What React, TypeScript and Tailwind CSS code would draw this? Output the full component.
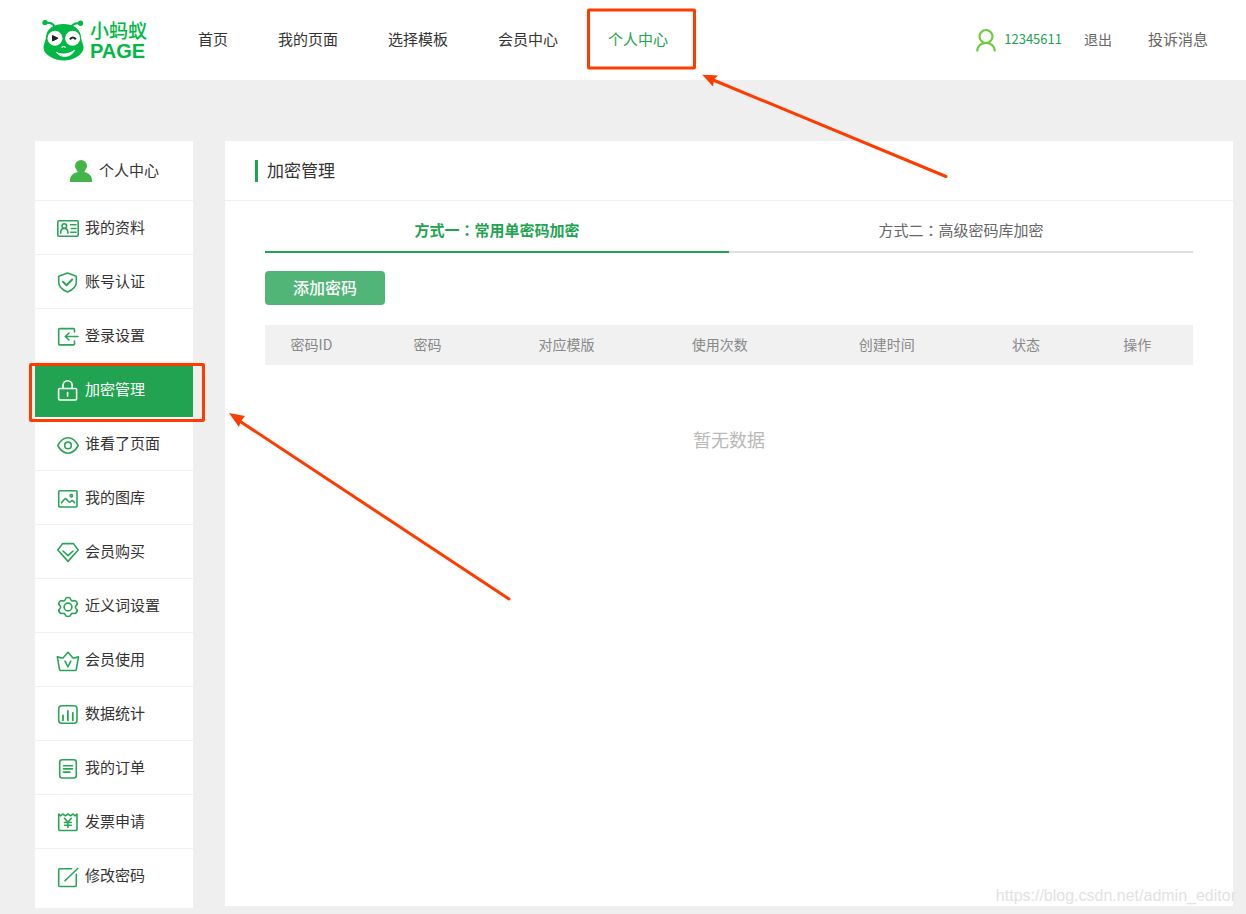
import { useState, type ReactNode } from 'react';
import { clsx } from 'clsx';

const navItems = ['首页', '我的页面', '选择模板', '会员中心', '个人中心'];

const menuItems: { label: string; icon: ReactNode }[] = [
  {
    label: '我的资料',
    icon: (
      <>
        <rect x="0.8" y="2.8" width="20.4" height="15.4" rx="1.2" />
        <circle cx="7.3" cy="8" r="2.3" />
        <path d="M3.6 15.2c0-3 1.5-4.8 3.7-4.8s3.7 1.8 3.7 4.8M13.5 6.8H19M14.5 10.5H19M13.5 14.2H19" />
      </>
    ),
  },
  {
    label: '账号认证',
    icon: (
      <>
        <path d="M10.5 1 19.3 4.200v6.300c0 4.300-3.700 7.300-8.800 9.500-5.100-2.200-8.800-5.200-8.800-9.500V4.200z" />
        <path d="m6 9.800 3.500 3.400 5.700-5.700" strokeWidth="2" />
      </>
    ),
  },
  {
    label: '登录设置',
    icon: (
      <>
        <path d="M17.500 6V3.600a1 1 0 0 0-1-1H2.700a1 1 0 0 0-1 1v14.300a1 1 0 0 0 1 1h13.800a1 1 0 0 0 1-1V15" />
        <path d="M21 10.500H8.500M12 7l-3.700 3.500L12 14" />
      </>
    ),
  },
  {
    label: '加密管理',
    icon: (
      <>
        <rect x="1.600" y="8.500" width="18" height="11.500" rx="1.200" />
        <path d="M6 8.500V5.300a4.600 4.600 0 0 1 9.200 0v3.200M10.600 12.500v3.700" />
      </>
    ),
  },
  {
    label: '谁看了页面',
    icon: (
      <>
        <path d="M.8 11.500C3.500 6.500 7 3.700 11 3.700s7.500 2.800 10.200 7.800c-2.700 5-6.200 7.700-10.200 7.700S3.500 16.500.8 11.500z" />
        <circle cx="11" cy="11.400" r="3.300" />
      </>
    ),
  },
  {
    label: '我的图库',
    icon: (
      <>
        <rect x="1.700" y="2.700" width="18.300" height="16.300" rx="1" />
        <circle cx="14.300" cy="7.800" r="1.200" />
        <path d="M4.500 14.800 7.700 11c.6-.5 1.100-.4 1.600.1l2.500 2.700c.5.500 1 .5 1.500.1l1.300-1c.5-.4 1-.3 1.500.2l1.400 1.700" />
      </>
    ),
  },
  {
    label: '会员购买',
    icon: (
      <>
        <path d="M5.500 1.600h11L21.200 8 11 19.400.8 8z" />
        <path d="m6 9 5 4.600L16 9" />
      </>
    ),
  },
  {
    label: '近义词设置',
    icon: (
      <>
        <path d="M8.300 3.200C8.600 1.800 9.300 1.500 11 1.500s2.400.3 2.700 1.700c.4 1.500 1.600 2.100 3 1.600 1.400-.5 2.200 0 3 1.400s.8 2.300-.4 3.200c-1.200 1-1.200 2.400 0 3.400 1.200.9 1.200 1.800.4 3.200s-1.600 1.900-3 1.400c-1.400-.5-2.600.1-3 1.600-.3 1.200-1 1.500-2.700 1.500s-2.400-.3-2.700-1.500c-.4-1.500-1.600-2.100-3-1.600-1.400.5-2.200 0-3-1.400s-.8-2.300.4-3.200c1.200-1 1.200-2.400 0-3.400-1.200-.9-1.200-1.800-.4-3.200s1.600-1.900 3-1.400c1.400.5 2.600-.1 3-1.600z" />
        <circle cx="11" cy="11" r="3.900" />
      </>
    ),
  },
  {
    label: '会员使用',
    icon: (
      <>
        <path d="M.3 6.800c2 .9 4 1.200 5.700 1.200L11 2.300 16 8c1.700 0 3.500-.3 5.500-1.200L19.300 19.300a1.500 1.500 0 0 1-1.500 1.200H4a1.500 1.500 0 0 1-1.500-1.200z" />
        <path d="m8 11.200 2.900 5.600 2.900-5.600" />
      </>
    ),
  },
  {
    label: '数据统计',
    icon: (
      <>
        <rect x="1.700" y="1.700" width="18.300" height="17.600" rx="3" />
        <path d="M6 11.500v4.800M10.900 6.800v9.500M15.800 8.800v7.500" strokeWidth="1.800" />
      </>
    ),
  },
  {
    label: '我的订单',
    icon: (
      <>
        <rect x="2.700" y="1.700" width="16.600" height="18.300" rx="2.500" />
        <path d="M6.500 7.700h9M6.500 10.900h9M6.500 14.100h6.500" />
      </>
    ),
  },
  {
    label: '发票申请',
    icon: (
      <>
        <path d="M1.700 2v15.300a1.200 1.200 0 0 0 1.200 1.200h15.900a1.200 1.200 0 0 0 1.200-1.200V2l-1.800 1.800L16 2l-2.400 1.800L10.900 2 8.300 3.800 5.700 2 3.500 3.800z" />
        <path d="m7.500 6.300 3.400 4L14.300 6.300M10.900 10.300v5.200M7.500 10.500h6.800M7.500 13.200h6.800" />
      </>
    ),
  },
  {
    label: '修改密码',
    icon: (
      <>
        <path d="M14.500 2.700H2.700a1 1 0 0 0-1 1v15.800a1 1 0 0 0 1 1h15.600a1 1 0 0 0 1-1V8.300" />
        <path d="M20.700 2.500 8 14.800" />
      </>
    ),
  },
];

const columns = [
  { title: '密码ID', width: 'w-[10%]' },
  { title: '密码', width: 'w-[15%]' },
  { title: '对应模版', width: 'w-[15%]' },
  { title: '使用次数', width: 'w-[18%]' },
  { title: '创建时间', width: 'w-[18%]' },
  { title: '状态', width: 'w-[12%]' },
  { title: '操作', width: 'w-[12%]' },
];

const tabs = ['方式一：常用单密码加密', '方式二：高级密码库加密'];

function Logo() {
  return (
    <a href="#" className="flex items-center gap-1.5 text-[#00b944]">
      <svg width="42" height="42" viewBox="0 0 42 42" fill="none">
        <path d="M3 4c5-.8 8.500.7 10 4.500M38.500 4.500c-5-.8-8 .5-9.500 4" stroke="currentColor" strokeWidth="2" />
        <circle cx="3" cy="3.600" r="2.700" fill="currentColor" />
        <circle cx="38.500" cy="4.300" r="2.700" fill="currentColor" />
        <path
          d="M21.500 5c8.500 0 15 3.500 17 10 .7 3.500.8 6.500 2.200 9.500 2.200 5.500 0 9.500-5.200 13-4 2.600-8.500 4-13.700 4s-10-1.400-14-4C2.300 34 .3 30 2.300 24.500 3.700 21.500 3.800 18.500 4.500 15 6.500 8.500 13 5 21.500 5z"
          fill="currentColor"
        />
        <circle cx="13" cy="19.300" r="7.500" fill="#fff" />
        <circle cx="30.600" cy="19.300" r="7.500" fill="#fff" />
        <path d="m10.500 16.500 5.500 2.800-5.500 2.700z" fill="#222" stroke="#222" />
        <path d="M28 20.500c1.200-2.700 4.500-2.700 5.700 0" stroke="#222" strokeWidth="2" />
        <path d="M19.700 28.600c.8-1.500 3-1.500 3.800 0" stroke="#fff" strokeWidth="1.200" />
        <path d="M14.500 33.600c6 2.600 12.500 1.600 18-2.300-3 6.500-12.500 8.700-18 2.300z" fill="#fff" stroke="#fff" strokeLinejoin="round" />
      </svg>
      <span className="flex flex-col gap-px pt-px">
        <span className="text-[19px] leading-5 font-medium">小蚂蚁</span>
        <span className="font-['Liberation_Sans',sans-serif] text-xl leading-5 font-bold">PAGE</span>
      </span>
    </a>
  );
}

function Header() {
  return (
    <header className="flex h-20 items-center bg-white pr-[38px] pl-[42px]">
      <Logo />
      <nav className="ml-[51px] flex gap-[50px] pb-0.5 text-[15px] text-[#333]">
        {navItems.map((item) =>
          item === '个人中心' ? (
            <a key={item} href="#" className="relative whitespace-nowrap text-[#22a351]">
              {item}
              {/* highlight frame with its pointer */}
              <span className="pointer-events-none absolute top-1/2 -left-[21px] h-[61px] w-[109px] -translate-y-1/2 rounded-xs border-3 border-[#ff3c00]">
                <svg className="absolute top-[63px] left-[112px]" width="250" height="108" viewBox="0 0 250 108">
                  <path d="M10 5 244 102" stroke="#ff3c00" strokeWidth="3" strokeLinecap="round" />
                  <path d="M0 0 16 1 12 5 11 12z" fill="#ff3c00" />
                </svg>
              </span>
            </a>
          ) : (
            <a key={item} href="#" className="whitespace-nowrap">
              {item}
            </a>
          ),
        )}
      </nav>
      <div className="ml-auto flex items-center pb-0.5 whitespace-nowrap text-[#666]">
        <a href="#" className="flex items-center gap-2 text-[13px] text-[#22a351]">
          <svg
            className="mt-0.5"
            width="20"
            height="24"
            viewBox="0 0 20 24"
            fill="none"
            stroke="#6fcb3e"
            strokeWidth="2.200"
            strokeLinecap="round"
          >
            <circle cx="10" cy="8.500" r="6.500" />
            <path d="M1.200 22.500c.8-4.500 4-7.500 8.800-7.500s8 3 8.800 7.500" />
          </svg>
          12345611
        </a>
        <a href="#" className="ml-[22px] text-sm">
          退出
        </a>
        <a href="#" className="ml-9 text-[15px]">
          投诉消息
        </a>
      </div>
    </header>
  );
}

function Sidebar() {
  return (
    <aside className="w-[158px] shrink-0 bg-white pb-[5px] text-[15px] text-[#333]">
      <div className="flex h-[60px] items-center gap-[7px] border-b border-[#efefef] pl-[35px]">
        <svg width="22" height="22" viewBox="0 0 22 22" fill="#43b549">
          <circle cx="11" cy="6" r="6" />
          <path d="M7.500 10h7v2.300c4.500.7 7.500 3.700 7.500 8V22H0v-1.700c0-4.300 3-7.300 7.500-8z" />
        </svg>
        个人中心
      </div>
      <ul>
        {menuItems.map(({ label, icon }, index) => {
          const active = label === '加密管理';
          const last = index === menuItems.length - 1;
          return (
            <li key={label} className="relative">
              <a
                href="#"
                className={clsx(
                  'flex h-[54px] items-center gap-1.5 border-b pl-[22px]',
                  active ? 'border-[#22a351] bg-[#22a351] text-white' : 'text-[#333]',
                  !active && (last ? 'border-white' : 'border-[#efefef]'),
                )}
              >
                <svg
                  className={clsx('mt-0.5 shrink-0 overflow-visible', active ? 'text-white' : 'text-[#2ba457]')}
                  width="22"
                  height="22"
                  viewBox="0 0 22 22"
                  fill="none"
                  stroke="currentColor"
                  strokeWidth="1.600"
                  strokeLinecap="round"
                  strokeLinejoin="round"
                >
                  {icon}
                </svg>
                {label}
              </a>
              {active && (
                <span className="pointer-events-none absolute top-0 -left-1.5 z-10 h-[59px] w-44 rounded-xs border-3 border-[#ff3c00]">
                  <svg className="absolute top-[47px] left-[197px]" width="286" height="192" viewBox="0 0 286 192">
                    <path d="M9 7 280 186" stroke="#ff3c00" strokeWidth="3" strokeLinecap="round" />
                    <path d="M0 0 16 3 12 8 10 14z" fill="#ff3c00" />
                  </svg>
                </span>
              )}
            </li>
          );
        })}
      </ul>
    </aside>
  );
}

export default function App() {
  const [activeTab, setActiveTab] = useState(0);

  return (
    <div className="relative min-h-screen bg-[#efefef] font-['Noto_Sans_CJK_SC',sans-serif]">
      <Header />
      <div className="flex gap-8 pt-[61px] pr-[13px] pb-1.5 pl-[35px]">
        <Sidebar />
        <main className="mb-0.5 min-w-0 flex-1 bg-white">
          <div className="flex h-[60px] items-center border-b border-[#efefef] pl-[30px]">
            <h1 className="border-l-3 border-[#22a351] pb-0.5 pl-[9px] text-[17px] leading-5 text-[#333]">加密管理</h1>
          </div>
          <div className="px-10">
            {/* the TC face centres the full-width colon */}
            <div role="tablist" className="grid grid-cols-2 font-['Noto_Sans_CJK_TC',sans-serif]">
              {tabs.map((tab, index) => (
                <button
                  key={tab}
                  type="button"
                  role="tab"
                  aria-selected={activeTab === index}
                  onClick={() => setActiveTab(index)}
                  className={clsx(
                    'h-[52px] border-b-2 pt-2 text-[15px]',
                    activeTab === index ? 'border-[#22a351] font-bold text-[#22a351]' : 'border-[#dfdfdf] text-[#666]',
                  )}
                >
                  {tab}
                </button>
              ))}
            </div>
            <button
              type="button"
              className="mt-[18px] block h-[34px] w-[120px] rounded bg-[#50b576] pb-0.5 text-base font-medium text-white"
            >
              添加密码
            </button>
            <table className="mt-5 w-full table-fixed text-center">
              <thead className="bg-[#f1f1f1] text-sm text-[#888]">
                <tr className="h-10">
                  {columns.map((column) => (
                    <th key={column.title} scope="col" className={clsx('pb-0.5 font-normal', column.width)}>
                      {column.title}
                    </th>
                  ))}
                </tr>
              </thead>
              <tbody>
                <tr>
                  <td colSpan={columns.length} className="h-[147px] text-lg text-[#b8b8b8]">
                    暂无数据
                  </td>
                </tr>
              </tbody>
            </table>
          </div>
        </main>
      </div>
      <span className="pointer-events-none absolute right-2.5 bottom-2 font-['Liberation_Sans',sans-serif] text-base leading-5 text-[#e2e2e2]">
        https://blog.csdn.net/admin_editor
      </span>
    </div>
  );
}
